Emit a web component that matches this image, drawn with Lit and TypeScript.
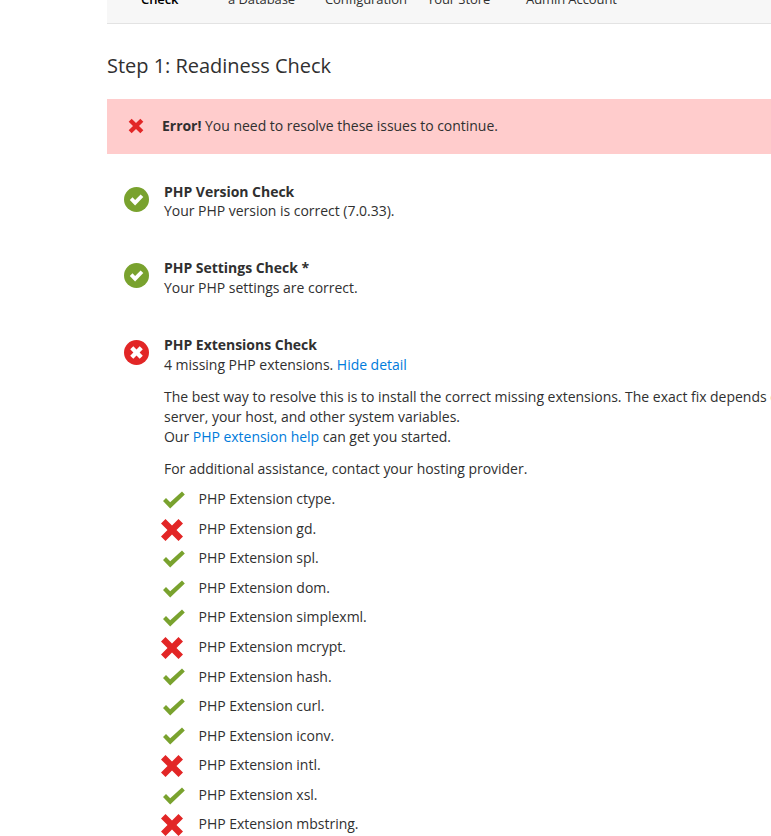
import { LitElement, html, css, svg } from "lit";
import { customElement } from "lit/decorators.js";

const exts: [string, boolean][] = [
  ["ctype", true], ["gd", false], ["spl", true], ["dom", true], ["simplexml", true],
  ["mcrypt", false], ["hash", true], ["curl", true], ["iconv", true], ["intl", false],
  ["xsl", true], ["mbstring", false],
];

const circleOk = html`<svg class="status" viewBox="0 0 26 26"><circle cx="12.5" cy="12.5" r="12.5" fill="#79a22e"/><path d="M5.8 13l2.7-2.700 2.600 2.700 5.500-5.600 2.700 2.700-8.200 8.300z" fill="#fff"/></svg>`;
const circleErr = html`<svg class="status" viewBox="0 0 26 26"><circle cx="12.5" cy="12.5" r="12.5" fill="#e22626"/><path d="M9.300 6.200l3.200 3.200 3.200-3.200 3.100 3.100-3.200 3.200 3.200 3.200-3.100 3.100-3.200-3.200-3.200 3.200-3.100-3.100 3.200-3.200-3.200-3.200z" fill="#fff"/></svg>`;
const tick = svg`<path d="M2 12l3-3 4.200 4.300L21 2.500l2.800 2.900L9.200 19.500z" fill="#79a22e"/>`;
const cross = svg`<path d="M5.500 1l6.500 6.500L18.500 1l4.500 4.500L16.500 12l6.500 6.500-4.500 4.500-6.500-6.500L5.500 23 1 18.500 7.500 12 1 5.500z" fill="#e22626"/>`;

@customElement("app-root")
export class AppRoot extends LitElement {
  static styles = css`
    :host { display: block; width: 771px; height: 836px; overflow: hidden; background: #fff;
      font-family: "Open Sans", sans-serif; font-size: 14px; line-height: 19.6px; color: #303030; letter-spacing: -0.025px; }
    .page { padding-left: 107px; width: 800px; box-sizing: border-box; }
    .nav { height: 23px; border-bottom: 1px solid #e3e3e3; background: #f7f7f7; display: flex; overflow: hidden;
      font-size: 13px; line-height: 16px; letter-spacing: -0.08px; color: #303030; }
    .nav span { white-space: nowrap; margin-top: -9px; }
    .nav .n1 { margin-left: 34px; font-weight: 600; color: #000; width: 87px; }
    .nav .n2 { width: 97px; }
    .nav .n3 { width: 102px; }
    .nav .n4 { width: 99px; }
    h1 { margin: 0; font-weight: 400; font-size: 20px; line-height: 28px; padding-top: 28px; color: #303030; }
    .alert { margin-top: 19px; height: 55px; background: #fcc; display: flex; align-items: center; width: 700px; }
    .alert svg { width: 16px; height: 16px; margin-left: 20.500px; margin-right: 18.500px; flex: none; position: relative; top: -1px; }
    .alert div { position: relative; top: -1px; }
    .check { display: flex; margin-left: 17px; }
    .check.first { margin-top: 27.700px; }
    .check .status { width: 26px; height: 26px; flex: none; margin-right: 14px; margin-top: 5px; }
    .title { font-weight: 700; }
    .body { flex: 1; }
    .gap { margin-top: 37.600px; }
    a { color: #007bdb; text-decoration: none; }
    p { margin: 13px 0 0; white-space: nowrap; }
    ul { list-style: none; margin: 5.500px 0 0; padding: 0; }
    li { display: flex; align-items: center; height: 29.550px; }
    li span { margin-left: 10.500px; }
    li svg { flex: none; position: relative; }
    li svg.ok { width: 24px; height: 24px; top: 2px; margin-left: -3px; margin-right: 3px; }
    li svg.bad { width: 24px; height: 24px; top: 1px; margin-left: -4px; margin-right: 4px; }
  `;

  render() {
    return html`<div class="page">
      <div class="nav">
        <span class="n1">Check</span><span class="n2">a Database</span><span class="n3">Configuration</span><span class="n4">Your Store</span><span>Admin Account</span>
      </div>
      <h1>Step 1: Readiness Check</h1>
      <div class="alert">
        <svg viewBox="0 0 24 24">${cross}</svg>
        <div><b>Error!</b> You need to resolve these issues to continue.</div>
      </div>
      <div class="check first">${circleOk}<div class="body"><div class="title">PHP Version Check</div><div>Your PHP version is correct (7.0.33).</div></div></div>
      <div class="check gap">${circleOk}<div class="body"><div class="title">PHP Settings Check *</div><div>Your PHP settings are correct.</div></div></div>
      <div class="check gap">${circleErr}<div class="body">
        <div class="title">PHP Extensions Check</div>
        <div>4 missing PHP extensions. <a href="#">Hide detail</a></div>
        <p>The best way to resolve this is to install the correct missing extensions. The exact fix depends on our<br>server, your host, and other system variables.<br>Our <a href="#">PHP extension help</a> can get you started.</p>
        <p>For additional assistance, contact your hosting provider.</p>
        <ul>${exts.map(([n, ok]) => html`<li><svg class=${ok ? "ok" : "bad"} viewBox="0 0 24 24">${ok ? tick : cross}</svg><span>PHP Extension ${n}.</span></li>`)}</ul>
      </div></div>
    </div>`;
  }
}
